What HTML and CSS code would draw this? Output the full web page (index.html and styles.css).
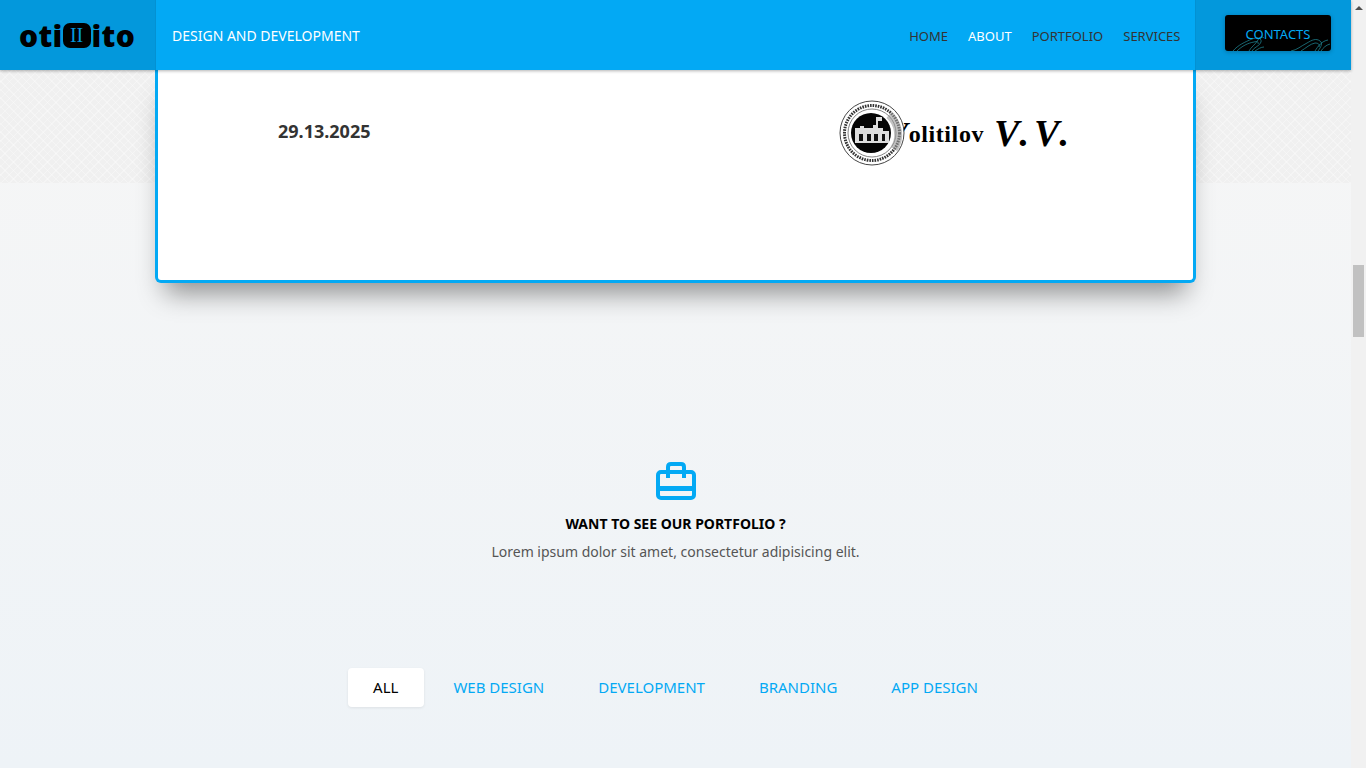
FILE: index.html
```html
<!DOCTYPE html>
<html lang="en">
<head>
  <meta charset="UTF-8">
  <meta name="viewport" content="width=device-width, initial-scale=1.0">
  <title>Otilito</title>
  <link rel="stylesheet" href="styles.css">
</head>
<body>

  <div class="page">
    <header class="topbar">
      <a class="logo" href="#">oti<span class="logo-box">II</span>ito</a>
      <div class="topbar-main">
        <span class="tagline">DESIGN AND DEVELOPMENT</span>
        <nav class="nav">
          <a href="#">HOME</a>
          <a class="active" href="#">ABOUT</a>
          <a href="#">PORTFOLIO</a>
          <a href="#">SERVICES</a>
        </nav>
      </div>
      <div class="topbar-side">
        <a class="contacts" href="#">
          <svg class="smoke" viewBox="0 0 106 36" fill="none" stroke="#22909f" stroke-width="0.7">
            <path d="M8 36c5-6 12-9 19-12 5-2 10-1 9 3-1 4-7 5-9 9"/>
            <path d="M12 36c5-5 11-8 17-9 3-1 5 0 4 2"/>
            <path d="M24 36c2-4 6-6 9-11 1-3 4-4 6-2"/>
            <path d="M30 36c3-2 6-4 9-4"/>
            <path d="M66 36c6-1 10-5 16-8 5-3 9-5 13-2 3 2 1 6-2 10"/>
            <path d="M76 36c5-3 9-7 14-8 3 0 5 1 4 4"/>
            <path d="M90 36c3-5 7-10 13-11"/>
            <path d="M96 36c2-3 5-6 9-7"/>
          </svg>
          <span>CONTACTS</span>
        </a>
      </div>
    </header>

    <main class="content">
      <section class="card">
        <strong class="date">29.13.2025</strong>
        <div class="signature">
          <svg class="stamp" viewBox="0 0 66 66">
            <circle cx="33" cy="33" r="32" fill="#fff" stroke="#444" stroke-width="1"/>
            <circle cx="33" cy="33" r="27.500" fill="none" stroke="#333" stroke-width="3" stroke-dasharray="1.600 1"/>
            <circle cx="33" cy="33" r="24" fill="none" stroke="#666" stroke-width="0.8"/>
            <circle cx="32" cy="33" r="20" fill="#050505"/>
            <path d="M16 28h5v-2h4v2h9v-3h3v-8h6v4h-4v7h5v3h6v12H16z" fill="#ddd"/>
            <path d="M20 34h4v7h-4zM28 34h4v7h-4zM35 34h4v7h-4zM43 34h3v7h-3z" fill="#111"/>
            <path d="M50 15a26 26 0 0 1 5 34" fill="none" stroke="#999" stroke-width="8" opacity="0.6"/>
          </svg>
          <span class="sign-name"><i>V</i>olitilov</span>
          <span class="sign-mark">V.V.</span>
        </div>
      </section>

      <section class="portfolio">
        <svg class="case-icon" viewBox="0 0 40 38" fill="none" stroke="#03a9f4" stroke-width="4">
          <rect x="2" y="10" width="36" height="26" rx="3"/>
          <path d="M12 16V5q0-3 3-3h10q3 0 3 3v11"/>
          <path d="M2 26.500h36" stroke-width="5"/>
        </svg>
        <h2>WANT TO SEE OUR PORTFOLIO ?</h2>
        <p>Lorem ipsum dolor sit amet, consectetur adipisicing elit.</p>
        <ul class="tabs">
          <li class="active">ALL</li>
          <li>WEB DESIGN</li>
          <li>DEVELOPMENT</li>
          <li>BRANDING</li>
          <li>APP DESIGN</li>
        </ul>
      </section>
    </main>
  </div>

  <div class="scrollbar">
    <span class="scroll-up"></span>
    <span class="scroll-thumb"></span>
  </div>

</body>
</html>
```

FILE: styles.css
```css
* {
  box-sizing: border-box;
}
html, body {
  height: 100%;
}
body {
  margin: 0;
  display: flex;
  height: 768px;
  overflow: hidden;
  font-family: "Noto Sans", Arial, sans-serif;
  color: #555;
}
a {
  text-decoration: none;
  color: inherit;
}
.page {
  flex: 1;
  min-width: 0;
  display: flex;
  flex-direction: column;
}

/* top bar */
.topbar {
  position: relative;
  z-index: 2;
  display: flex;
  height: 70px;
  background-color: #0398dc;
  box-shadow: 0 1px 3px rgba(0, 0, 0, 0.3);
}
.logo {
  width: 155px;
  padding-left: 19px;
  display: flex;
  align-items: center;
  font-size: 30px;
  font-weight: 900;
  letter-spacing: 0.3px;
  color: #000;
}
.logo-box {
  display: flex;
  align-items: center;
  justify-content: center;
  width: 28px;
  height: 25px;
  margin: 1px 1px 0 0;
  border-radius: 7px;
  background-color: #000;
  color: #0398dc;
  font-family: "Liberation Serif", serif;
  font-size: 20px;
  font-weight: 400;
  letter-spacing: 0;
}
.topbar-main {
  flex: 1;
  display: flex;
  align-items: center;
  justify-content: space-between;
  padding: 0 14.500px 0 16px;
  background-color: #03a9f4;
  border-left: 1px solid #0391d2;
  border-right: 1px solid #0391d2;
}
.tagline {
  font-size: 14px;
  color: #fff;
}
.nav {
  display: flex;
  gap: 20px;
  padding-top: 2px;
  font-size: 13px;
  color: #333;
}
.nav .active {
  color: #fff;
}
.topbar-side {
  width: 155px;
  padding: 15px 20px 0 29px;
}
.contacts {
  position: relative;
  display: block;
  height: 36px;
  border-radius: 3px;
  background-color: #000;
  box-shadow: 0 1px 4px rgba(0, 0, 0, 0.25);
  color: #03a9f4;
  font-size: 13px;
  line-height: 38px;
  text-align: center;
  overflow: hidden;
}
.contacts span {
  position: relative;
}
.smoke {
  position: absolute;
  left: 0;
  top: 0;
  width: 100%;
  height: 100%;
  filter: blur(0.6px);
}

/* main area */
.content {
  flex: 1;
  background-color: #f5f5f5;
  background-image:
    repeating-linear-gradient(45deg, rgba(255, 255, 255, 0.3) 0 1px, transparent 1px 6px),
    repeating-linear-gradient(-45deg, rgba(255, 255, 255, 0.3) 0 1px, transparent 1px 6px),
    linear-gradient(#f0f0f0, #f0f0f0),
    linear-gradient(#f6f6f6, #eef3f7);
  background-size: 100% 113px, 100% 113px, 100% 113px, 100% 100%;
  background-repeat: no-repeat;
}
.card {
  display: flex;
  justify-content: space-between;
  align-items: flex-start;
  width: 1041px;
  height: 213px;
  margin: 0 auto;
  padding: 30px 119px 0 120px;
  background-color: #fff;
  border: 3px solid #03a9f4;
  border-top: 0;
  border-radius: 0 0 6px 6px;
  box-shadow: 0 20px 25px -10px rgba(0, 0, 0, 0.42);
}
.date {
  margin-top: 19px;
  font-size: 18px;
  line-height: 25px;
  color: #333;
}
.signature {
  display: flex;
  align-items: center;
  height: 66px;
  color: #000;
  font-family: "Liberation Serif", serif;
  font-weight: 700;
}
.stamp {
  width: 66px;
  height: 66px;
  filter: blur(0.5px);
}
.sign-name {
  margin: 0 0 3px -17px;
  font-size: 24px;
  letter-spacing: 0.6px;
}
.sign-name i {
  font-size: 30px;
}
.sign-mark {
  margin-left: 10px;
  font-size: 38px;
  font-style: italic;
  letter-spacing: 5px;
}

/* portfolio */
.portfolio {
  display: flex;
  flex-direction: column;
  align-items: center;
  padding-top: 179px;
}
.case-icon {
  width: 40px;
  height: 38px;
}
.portfolio h2 {
  margin: 14px 0 0;
  font-size: 14px;
  line-height: 19px;
  font-weight: 700;
  color: #000;
}
.portfolio p {
  margin: 9px 0 0;
  font-size: 14px;
  line-height: 19px;
}
.tabs {
  display: flex;
  gap: 4px;
  margin: 107px 0 0;
  padding: 0;
  list-style: none;
  font-size: 15px;
  line-height: 39px;
  color: #03a9f4;
}
.tabs li {
  padding: 0 25px;
  border-radius: 4px;
}
.tabs .active {
  padding-right: 26px;
  background-color: #fff;
  color: #000;
  box-shadow: 0 1px 3px rgba(0, 0, 0, 0.08);
}

/* scrollbar */
.scrollbar {
  flex: none;
  width: 15px;
  padding: 6px 2px 0;
  background-color: #f1f1f1;
}
.scroll-up {
  display: block;
  width: 0;
  margin: 0 auto;
  border: 4px solid transparent;
  border-top: 0;
  border-bottom: 4px solid #505050;
}
.scroll-thumb {
  display: block;
  height: 72px;
  margin-top: 255px;
  background-color: #c1c1c1;
}
```
